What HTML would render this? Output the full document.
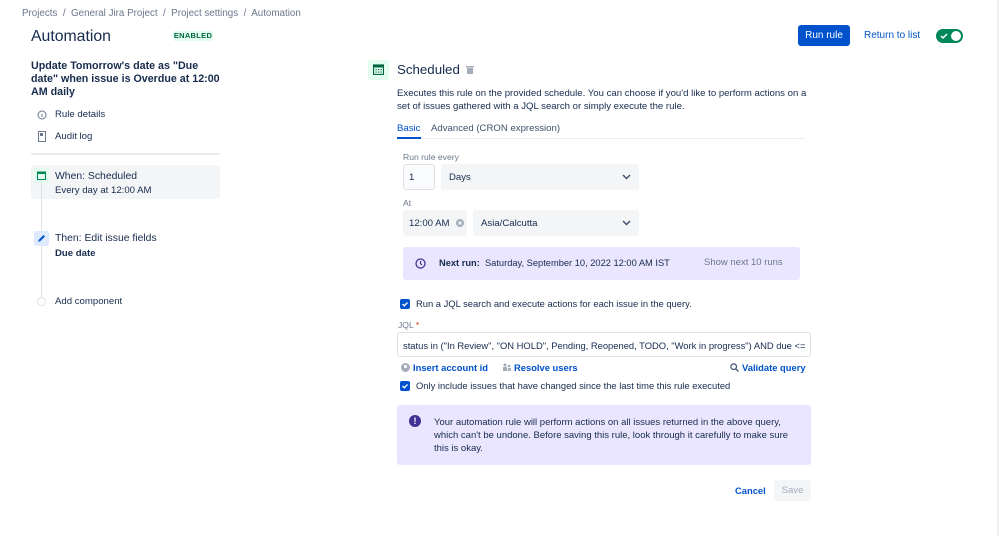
<!DOCTYPE html>
<html><head><meta charset="utf-8">
<style>
*{box-sizing:border-box;margin:0;padding:0}
body{width:999px;height:536px;background:#fff;font-family:"Liberation Sans",Arial,sans-serif;color:#172b4d;position:relative;overflow:hidden;font-size:9.6px}
.a{position:absolute;white-space:nowrap}
.blue{color:#0052cc}
.sel{position:absolute;background:#f4f5f7;border-radius:3px}
.chev{position:absolute;right:8px;top:50%;margin-top:-4px}
.cb{position:absolute;width:10px;height:10px;background:#0052cc;border-radius:2px}
</style></head><body>
<div style="position:absolute;right:0;top:0;width:2px;height:536px;background:#f0f1f3"></div>
<div class="a" style="left:22px;top:8px;color:#6b778c;font-size:9.8px">Projects &nbsp;/&nbsp; General Jira Project &nbsp;/&nbsp; Project settings &nbsp;/&nbsp; Automation</div>
<div class="a" style="left:31px;top:28px;font-size:15.8px">Automation</div>
<div class="a" style="left:173px;top:31px;width:40px;height:10px;background:#e3fcef;color:#006644;font-size:7.5px;font-weight:bold;text-align:center;line-height:10px;border-radius:2px;letter-spacing:.3px">ENABLED</div>

<div class="a" style="left:31px;top:60px;font-size:10.7px;font-weight:bold;line-height:13px;white-space:normal;width:190px">Update Tomorrow's date as "Due date" when issue is Overdue at 12:00 AM daily</div>
<svg class="a" style="left:37px;top:110px" width="10" height="10"><circle cx="5" cy="5" r="4" fill="none" stroke="#6b778c" stroke-width="1"/><rect x="4.5" y="4" width="1" height="3" fill="#6b778c"/></svg>
<div class="a" style="left:55px;top:109px">Rule details</div>
<svg class="a" style="left:38px;top:131px" width="8" height="11"><rect x=".5" y=".5" width="7" height="10" fill="none" stroke="#6b778c"/><rect x="2" y="2" width="3" height="3" fill="#6b778c"/></svg>
<div class="a" style="left:55px;top:131px">Audit log</div>
<div class="a" style="left:31px;top:153px;width:189px;height:2px;background:#ebecf0"></div>
<div class="a" style="left:31px;top:165px;width:189px;height:34px;background:#f4f5f7;border-radius:3px"></div>
<div class="a" style="left:41px;top:182px;width:1px;height:118px;background:#dfe1e6"></div>
<div class="a" style="left:34px;top:168px;width:15px;height:15px;background:#e3fcef;border-radius:2px"></div>
<svg class="a" style="left:37px;top:171px" width="9" height="9"><rect x=".5" y="1" width="8" height="7.5" fill="none" stroke="#00875a"/><rect x=".5" y="1" width="8" height="2" fill="#00875a"/></svg>
<div class="a" style="left:55px;top:171px;font-size:10.4px">When: Scheduled</div>
<div class="a" style="left:55px;top:185px;font-size:9.6px">Every day at 12:00 AM</div>
<div class="a" style="left:34px;top:231px;width:15px;height:15px;background:#deebff;border-radius:2px"></div>
<svg class="a" style="left:37px;top:234px" width="9" height="9"><path d="M1 8 L2 5.5 L6.5 1 L8 2.5 L3.5 7 Z" fill="#0052cc"/></svg>
<div class="a" style="left:55px;top:233px;font-size:10.4px">Then: Edit issue fields</div>
<div class="a" style="left:55px;top:248px;font-size:9.6px;font-weight:bold">Due date</div>
<div class="a" style="left:37px;top:297px;width:9px;height:9px;border:1px solid #dfe1e6;border-radius:50%;background:#fff"></div>
<div class="a" style="left:55px;top:296px">Add component</div>

<div class="a" style="left:798px;top:25px;width:52px;height:21px;background:#0052cc;color:#fff;border-radius:3px;text-align:center;line-height:21px;font-size:10px">Run rule</div>
<div class="a blue" style="left:864px;top:30px;font-size:10px">Return to list</div>
<div class="a" style="left:936px;top:29px;width:27px;height:14px;background:#00875a;border-radius:7px"></div>
<div class="a" style="left:951px;top:31px;width:10px;height:10px;background:#fff;border-radius:50%"></div>
<svg class="a" style="left:940px;top:32px" width="8" height="8"><path d="M1 4 L3 6 L7 2" fill="none" stroke="#fff" stroke-width="1.5"/></svg>

<div class="a" style="left:368px;top:60px;width:21px;height:20px;background:#e3fcef;border-radius:3px"></div>
<svg class="a" style="left:373px;top:64px" width="11" height="11"><rect x=".5" y="1" width="10" height="9.5" fill="none" stroke="#006644" stroke-width="1.2"/><rect x=".5" y="1" width="10" height="2.5" fill="#006644"/><g fill="#006644"><rect x="2.5" y="5" width="1.2" height="1.2"/><rect x="5" y="5" width="1.2" height="1.2"/><rect x="7.5" y="5" width="1.2" height="1.2"/><rect x="2.5" y="7.5" width="1.2" height="1.2"/><rect x="5" y="7.5" width="1.2" height="1.2"/><rect x="7.5" y="7.5" width="1.2" height="1.2"/></g></svg>
<div class="a" style="left:397px;top:62px;font-size:13.3px">Scheduled</div>
<svg class="a" style="left:466px;top:65px" width="8" height="9"><rect x="0" y="1" width="8" height="1.5" fill="#a5adba"/><rect x="1" y="3" width="6" height="6" fill="#a5adba"/></svg>
<div class="a" style="left:397px;top:87px;line-height:13px">Executes this rule on the provided schedule. You can choose if you'd like to perform actions on a<br>set of issues gathered with a JQL search or simply execute the rule.</div>
<div class="a blue" style="left:397px;top:123px">Basic</div>
<div class="a" style="left:431px;top:123px;color:#42526e">Advanced (CRON expression)</div>
<div class="a" style="left:397px;top:138px;width:408px;height:1px;background:#ebecf0"></div>
<div class="a" style="left:397px;top:137px;width:24px;height:2px;background:#0052cc"></div>
<div class="a" style="left:403px;top:152px;font-size:8.6px;color:#6b778c">Run rule every</div>
<div class="a" style="left:403px;top:164px;width:32px;height:26px;border:1.5px solid #dfe1e6;border-radius:3px;background:#fafbfc;padding:7px 0 0 5px">1</div>
<div class="sel" style="left:441px;top:164px;width:198px;height:26px;padding:8px 0 0 8px">Days<svg class="chev" width="9" height="8"><path d="M1 2 L4.5 5.5 L8 2" fill="none" stroke="#42526e" stroke-width="1.5"/></svg></div>
<div class="a" style="left:403px;top:198px;font-size:8.6px;color:#6b778c">At</div>
<div class="sel" style="left:403px;top:210px;width:64px;height:26px;padding:8px 0 0 6px">12:00 AM<svg style="position:absolute;left:53px;top:9px" width="8" height="8"><circle cx="4" cy="4" r="4" fill="#a5adba"/><path d="M2.5 2.5 L5.5 5.5 M5.5 2.5 L2.5 5.5" stroke="#fff"/></svg></div>
<div class="sel" style="left:473px;top:210px;width:166px;height:26px;padding:8px 0 0 8px">Asia/Calcutta<svg class="chev" width="9" height="8"><path d="M1 2 L4.5 5.5 L8 2" fill="none" stroke="#42526e" stroke-width="1.5"/></svg></div>
<div class="a" style="left:403px;top:247px;width:397px;height:33px;background:#eae6ff;border-radius:3px"></div>
<svg class="a" style="left:415px;top:258px" width="11" height="11"><circle cx="5.5" cy="5.5" r="4.5" fill="none" stroke="#403294" stroke-width="1.3"/><path d="M5.5 3 V5.5 L7 7" fill="none" stroke="#403294" stroke-width="1.2"/></svg>
<div class="a" style="left:439px;top:258px;font-size:9.3px"><b>Next run:</b>&nbsp; Saturday, September 10, 2022 12:00 AM IST</div>
<div class="a" style="left:704px;top:257px;font-size:9.5px;color:#6b778c">Show next 10 runs</div>

<div class="cb" style="left:400px;top:299px"></div>
<svg class="a" style="left:401px;top:300px" width="8" height="8"><path d="M1.5 4 L3.3 5.8 L6.5 2.5" fill="none" stroke="#fff" stroke-width="1.3"/></svg>
<div class="a" style="left:416px;top:298px;font-size:9.4px">Run a JQL search and execute actions for each issue in the query.</div>
<div class="a" style="left:398px;top:320px;font-size:8.6px;color:#6b778c">JQL <span style="color:#de350b">*</span></div>
<div class="a" style="left:397px;top:332px;width:414px;height:25px;border:1.5px solid #dfe1e6;border-radius:3px;background:#fff;padding:7px 0 0 5px;font-size:9.4px;overflow:hidden">status in ("In Review", "ON HOLD", Pending, Reopened, TODO, "Work in progress") AND due &lt;=</div>
<svg class="a" style="left:401px;top:363px" width="9" height="9"><circle cx="4.5" cy="4.5" r="4.5" fill="#a5adba"/><circle cx="4.5" cy="3.5" r="1.6" fill="#fff"/></svg>
<div class="a blue" style="left:413px;top:362px;font-weight:bold;font-size:9.4px">Insert account id</div>
<svg class="a" style="left:502px;top:363px" width="9" height="9"><circle cx="3" cy="2" r="1.5" fill="#a5adba"/><rect x="1" y="4" width="4" height="4" fill="#a5adba"/><circle cx="7" cy="3" r="1.3" fill="#a5adba"/><rect x="5.8" y="5" width="3" height="3" fill="#a5adba"/></svg>
<div class="a blue" style="left:514px;top:362px;font-weight:bold;font-size:9.4px">Resolve users</div>
<svg class="a" style="left:730px;top:363px" width="9" height="9"><circle cx="3.7" cy="3.7" r="2.8" fill="none" stroke="#42526e" stroke-width="1.2"/><path d="M5.8 5.8 L8.5 8.5" stroke="#42526e" stroke-width="1.3"/></svg>
<div class="a blue" style="left:742px;top:362px;font-weight:bold;font-size:9.4px">Validate query</div>
<div class="cb" style="left:400px;top:381px"></div>
<svg class="a" style="left:401px;top:382px" width="8" height="8"><path d="M1.5 4 L3.3 5.8 L6.5 2.5" fill="none" stroke="#fff" stroke-width="1.3"/></svg>
<div class="a" style="left:416px;top:380px;font-size:9.4px">Only include issues that have changed since the last time this rule executed</div>
<div class="a" style="left:397px;top:405px;width:414px;height:60px;background:#eae6ff;border-radius:3px"></div>
<div class="a" style="left:409px;top:415px;width:12px;height:12px;background:#403294;border-radius:50%;color:#fff;font-size:9px;font-weight:bold;text-align:center;line-height:12px">!</div>
<div class="a" style="left:434px;top:416px;font-size:9.5px;line-height:13px">Your automation rule will perform actions on all issues returned in the above query,<br>which can't be undone. Before saving this rule, look through it carefully to make sure<br>this is okay.</div>
<div class="a blue" style="left:735px;top:485px;font-weight:bold;font-size:9.4px">Cancel</div>
<div class="a" style="left:774px;top:480px;width:37px;height:21px;background:#f4f5f7;border-radius:3px;color:#a5adba;text-align:center;line-height:21px;font-size:9.6px">Save</div>
</body></html>
